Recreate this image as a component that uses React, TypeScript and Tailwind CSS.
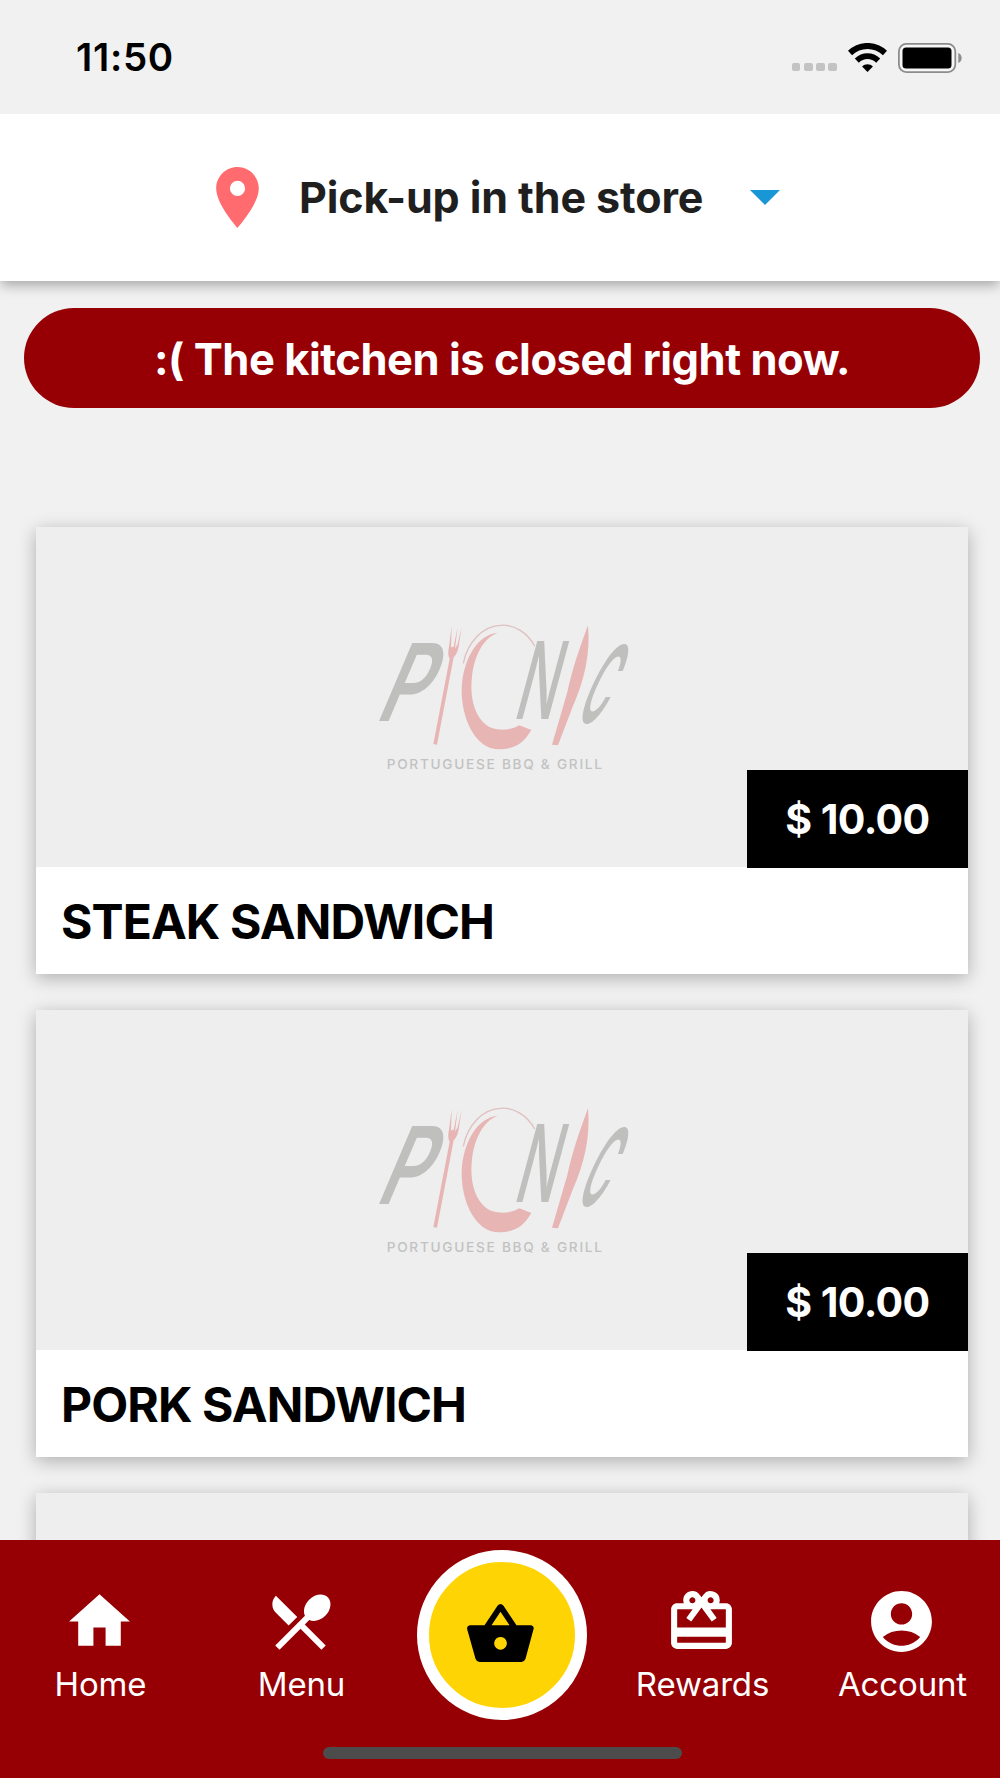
import React, { useState } from "react";
import { MdAccountCircle, MdCardGiftcard, MdHome, MdPlace, MdRestaurantMenu } from "react-icons/md";
import type { IconType } from "react-icons";

interface Product {
  id: number;
  name: string;
  price: string;
}

const products: Product[] = [
  { id: 1, name: "STEAK SANDWICH", price: "$ 10.00" },
  { id: 2, name: "PORK SANDWICH", price: "$ 10.00" },
];

function WifiIcon() {
  return (
    <svg viewBox="0 0 39 29" className="h-[29px] w-[39px]" fill="none" stroke="#000">
      <path d="M2 10C12 0.6 27 0.6 37 10" strokeWidth="6" />
      <path d="M8.8 17.6C15 11.7 24 11.7 30.2 17.6" strokeWidth="5.8" />
      <path d="M19.5 29l-5.4-5.5c3-2.9 7.8-2.9 10.8 0z" fill="#000" stroke="none" />
    </svg>
  );
}

function BatteryIcon() {
  return (
    <svg viewBox="0 0 65 30" className="h-[30px] w-[65px]">
      <rect x="0.9" y="0.9" width="56.4" height="28.2" rx="7.5" fill="#f6f6f6" stroke="#8c8c8c" strokeWidth="1.8" />
      <rect x="4.5" y="4.5" width="49" height="21" rx="3.5" fill="#000" />
      <path d="M60.3 10c4.500 1.500 4.500 8.500 0 10z" fill="#8c8c8c" />
    </svg>
  );
}

function StatusBar() {
  return (
    <div className="z-20 flex h-[114px] shrink-0 items-center justify-between bg-[#f1f1f1] pt-[1px] pr-[37px] pl-[76px]">
      <span className="pt-[1px] text-[38.5px] font-semibold tracking-[0.7px] text-black">11:50</span>
      <div className="flex items-center">
        <div className="mt-[19px] flex gap-[3.5px]">
          <i className="size-[8.7px] rounded-[2px] bg-[#c3c3c3]" />
          <i className="size-[8.7px] rounded-[2px] bg-[#c3c3c3]" />
          <i className="size-[8.7px] rounded-[2px] bg-[#c3c3c3]" />
          <i className="size-[8.7px] rounded-[2px] bg-[#c3c3c3]" />
        </div>
        <div className="mr-[11px] ml-[11px]">
          <WifiIcon />
        </div>
        <BatteryIcon />
      </div>
    </div>
  );
}

// Pick-up selector
function StoreHeader() {
  return (
    <button className="z-10 flex h-[167px] shrink-0 items-center bg-white pl-[201px] shadow-[0_5px_12px_-1px_rgba(0,0,0,0.32)]">
      <MdPlace className="size-[73px] text-[#ff6b6f]" />
      <span className="ml-[25px] w-[406px] text-left text-[43px] font-bold tracking-[-0.1px] whitespace-nowrap text-[#1f1f1f]">
        Pick-up in the store
      </span>
      <svg viewBox="0 0 30 15" className="ml-[45px] h-[15px] w-[30px]">
        <path d="M0 0h30L15 15z" fill="#1896d6" />
      </svg>
    </button>
  );
}

// Faded logo shown while a product has no photo
function PicnicLogo() {
  return (
    <svg viewBox="0 0 840 570" className="h-[190px] w-[280px] overflow-visible">
      <g fontFamily="Inter, sans-serif" fill="#bfc0be">
        <text transform="translate(35 364) skewX(-23) scale(0.68 1)" fontSize="322" fontWeight="600">P</text>
        <text transform="translate(450 358) skewX(-15) scale(0.5 1)" fontSize="322" fontWeight="500">N</text>
        <text transform="translate(634 368) skewX(-25) scale(0.34 1)" fontSize="322" fontWeight="600">C</text>
      </g>
      <g fill="#e8b5b5">
        {/* fork */}
        <path d="M214 432l11 2 50-262c10-8 14-24 16-40l8-52-12 52-8 14 8-66-12 60-8 2 2-64-8 62c-4 18-2 28 2 36z" />
        {/* plate */}
        <path d="M408 98C350 102 308 170 300 250c-8 82 30 198 112 198 42 0 72-16 96-58l-36-14c-20 12-52 18-82 8-50-20-68-90-60-154 6-60 34-118 78-132z" />
        <path d="M304 190C316 128 362 78 414 76c42-4 82 22 104 62" fill="none" stroke="#e0bfbf" strokeWidth="4" />
        {/* knife */}
        <path d="M678 76c8 86-12 168-46 244l-44 116-18-2 46-158c14-66 36-130 62-200z" />
      </g>
      <text
        x="74"
        y="507"
        fontFamily="Inter, sans-serif"
        fontSize="41"
        fontWeight="500"
        fill="#c2c2c2"
        textLength="646"
      >
        PORTUGUESE BBQ & GRILL
      </text>
    </svg>
  );
}

function ProductCard({ product }: { product: Product }) {
  return (
    <div className="h-[447px] shrink-0 bg-white shadow-[0_4px_17px_rgba(0,0,0,0.28)]">
      <div className="relative flex h-[340px] justify-center bg-[#eeeeee] pt-[73px]">
        <PicnicLogo />
        <div className="absolute right-0 bottom-[-1px] flex h-[98px] w-[221px] items-center justify-center bg-black pt-[2px] text-[41px] font-bold tracking-[-0.6px] whitespace-nowrap text-white">
          {product.price}
        </div>
      </div>
      <div className="flex h-[107px] items-center pt-[2px] pl-[25px] text-[48px] font-bold tracking-[-0.9px] text-black">
        {product.name}
      </div>
    </div>
  );
}

interface TabProps {
  icon: IconType;
  label: string;
  onClick: () => void;
}

function Tab({ icon: Icon, label, onClick }: TabProps) {
  return (
    <button onClick={onClick} className="flex flex-col items-center pt-[45px] text-white">
      <Icon className="mr-[1.5px] size-[73px]" />
      <span className="mt-[4px] ml-[1px] text-[33px] leading-[44px] font-normal tracking-[-0.15px]">{label}</span>
    </button>
  );
}

function TabBar() {
  const [, setActive] = useState("Menu");

  return (
    <nav className="z-10 flex h-[238px] shrink-0 flex-col bg-[#960005]">
      <div className="grid h-[207px] grid-cols-[200px_202px_200px_200px_200px]">
        <Tab icon={MdHome} label="Home" onClick={() => setActive("Home")} />
        <Tab icon={MdRestaurantMenu} label="Menu" onClick={() => setActive("Menu")} />
        <div className="flex justify-center pt-[10px]">
          <button className="flex size-[170px] items-center justify-center rounded-full border-[12px] border-white bg-[#ffd405]">
            <svg viewBox="0 0 200 174" className="mr-[3px] mb-[4px] h-[58px] w-[67px]">
              <path
                fillRule="evenodd"
                d="M52 64L91 5q9-10 18 0l39 59h44q10 2 7 12l-24 88q-3 9-12 10H37q-9-1-12-10L0 76q-2-10 8-12zM73 64h54l-27-41zM100 99a19 19 0 1 0 .1 0z"
              />
            </svg>
          </button>
        </div>
        <Tab icon={MdCardGiftcard} label="Rewards" onClick={() => setActive("Rewards")} />
        <Tab icon={MdAccountCircle} label="Account" onClick={() => setActive("Account")} />
      </div>
      <div className="ml-[322.5px] h-[12px] w-[359px] rounded-full bg-[#4c4c4c]" />
    </nav>
  );
}

export default function App() {
  return (
    <div className="flex h-[1778px] w-[1000px] flex-col overflow-hidden bg-[#f1f1f1] font-['Inter',sans-serif]">
      <StatusBar />
      <StoreHeader />
      <main className="flex min-h-0 flex-1 flex-col overflow-hidden">
        <div className="mt-[27px] mr-[20px] ml-[24px] flex h-[100px] shrink-0 items-center justify-center rounded-full bg-[#960005] pt-[3px] text-[43.5px] font-bold tracking-[-0.47px] whitespace-nowrap text-white">
          :( The kitchen is closed right now.
        </div>
        <div className="mt-[119px] mr-[32px] ml-[36px] flex flex-col gap-[36px]">
          {products.map(product => (
            <ProductCard key={product.id} product={product} />
          ))}
          {/* next card, still loading below the fold */}
          <div className="h-[340px] shrink-0 bg-[#eeeeee] shadow-[0_4px_17px_rgba(0,0,0,0.28)]" />
        </div>
      </main>
      <TabBar />
    </div>
  );
}
